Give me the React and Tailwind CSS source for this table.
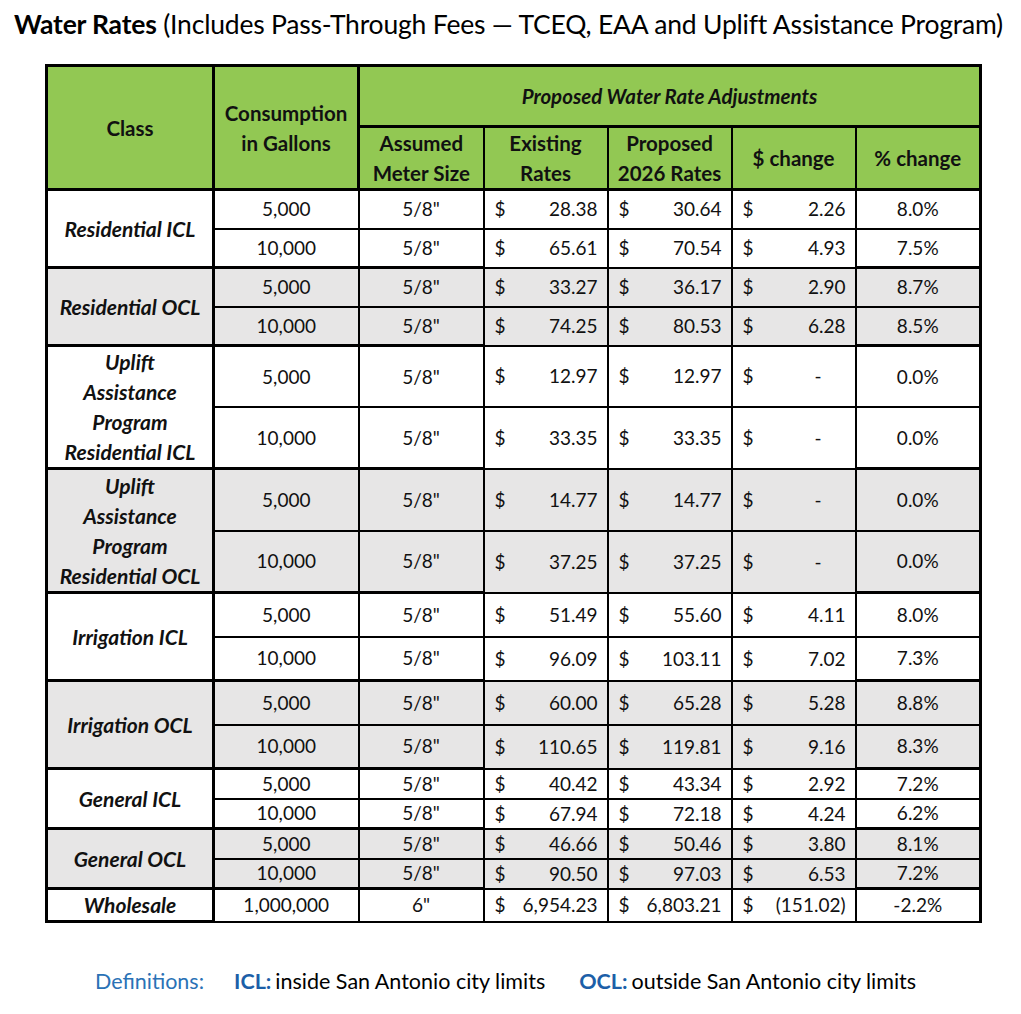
import React from 'react';

const groups = [
  { label: ['Residential ICL'], gray: false, h: 39, rows: [
    ['5,000', '5/8"', '28.38', '30.64', '2.26', '8.0%'],
    ['10,000', '5/8"', '65.61', '70.54', '4.93', '7.5%'],
  ] },
  { label: ['Residential OCL'], gray: true, h: 39, rows: [
    ['5,000', '5/8"', '33.27', '36.17', '2.90', '8.7%'],
    ['10,000', '5/8"', '74.25', '80.53', '6.28', '8.5%'],
  ] },
  { label: ['Uplift', 'Assistance', 'Program', 'Residential ICL'], gray: false, h: 61, rows: [
    ['5,000', '5/8"', '12.97', '12.97', '-', '0.0%'],
    ['10,000', '5/8"', '33.35', '33.35', '-', '0.0%'],
  ] },
  { label: ['Uplift', 'Assistance', 'Program', 'Residential OCL'], gray: true, h: 62, rows: [
    ['5,000', '5/8"', '14.77', '14.77', '-', '0.0%'],
    ['10,000', '5/8"', '37.25', '37.25', '-', '0.0%'],
  ] },
  { label: ['Irrigation ICL'], gray: false, h: 44, rows: [
    ['5,000', '5/8"', '51.49', '55.60', '4.11', '8.0%'],
    ['10,000', '5/8"', '96.09', '103.11', '7.02', '7.3%'],
  ] },
  { label: ['Irrigation OCL'], gray: true, h: 44, rows: [
    ['5,000', '5/8"', '60.00', '65.28', '5.28', '8.8%'],
    ['10,000', '5/8"', '110.65', '119.81', '9.16', '8.3%'],
  ] },
  { label: ['General ICL'], gray: false, h: 30, rows: [
    ['5,000', '5/8"', '40.42', '43.34', '2.92', '7.2%'],
    ['10,000', '5/8"', '67.94', '72.18', '4.24', '6.2%'],
  ] },
  { label: ['General OCL'], gray: true, h: 30, rows: [
    ['5,000', '5/8"', '46.66', '50.46', '3.80', '8.1%'],
    ['10,000', '5/8"', '90.50', '97.03', '6.53', '7.2%'],
  ] },
  { label: ['Wholesale'], gray: false, h: 30, rows: [
    ['1,000,000', '6"', '6,954.23', '6,803.21', '(151.02)', '-2.2%'],
  ] },
];

const Money = ({ value }) => (
  <td className="border-2 border-black px-0">
    <div className="flex justify-between pl-[10px] pr-[9px]">
      <span>$</span>
      <span className={value === '-' ? 'pr-[24px]' : ''}>{value}</span>
    </div>
  </td>
);

const App = () => {
  return (
    <div className="w-[1021px] h-[1014px] bg-white text-black font-['Lato',sans-serif]">
      <h1 className="pl-[14px] pt-[6px] text-[26.5px] leading-[36px] tracking-[-0.2px] whitespace-nowrap">
        <span className="font-bold">Water Rates</span> (Includes Pass-Through Fees — TCEQ, EAA and Uplift Assistance Program)
      </h1>

      <table className="ml-[45px] mt-[22px] w-[934px] table-fixed border-collapse text-[19px] leading-[24px] text-[#111]">
        <colgroup>
          <col className="w-[167px]" />
          <col className="w-[145px]" />
          <col className="w-[125px]" />
          <col className="w-[124px]" />
          <col className="w-[124px]" />
          <col className="w-[124px]" />
          <col className="w-[125px]" />
        </colgroup>
        <thead className="bg-[#92C853] text-[20.5px] leading-[30px]">
          <tr className="h-[61px]">
            <th rowSpan={2} className="border-[3px] border-black font-bold">Class</th>
            <th rowSpan={2} className="border-[3px] border-black font-bold">Consumption<br />in Gallons</th>
            <th colSpan={5} className="border-[3px] border-black font-bold italic">Proposed Water Rate Adjustments</th>
          </tr>
          <tr className="h-[60px]">
            <th className="border-2 border-b-[3px] border-black font-bold">Assumed<br />Meter Size</th>
            <th className="border-2 border-b-[3px] border-black font-bold">Existing<br />Rates</th>
            <th className="border-2 border-b-[3px] border-black font-bold">Proposed<br />2026 Rates</th>
            <th className="border-2 border-b-[3px] border-black font-bold">$ change</th>
            <th className="border-2 border-b-[3px] border-r-[3px] border-black font-bold">% change</th>
          </tr>
        </thead>
        <tbody>
          {groups.map((g, gi) =>
            g.rows.map((r, ri) => (
              <tr
                key={`${gi}-${ri}`}
                className={g.gray ? 'bg-[#E7E6E6]' : 'bg-white'}
                style={{ height: g.h }}
              >
                {ri === 0 && (
                  <td
                    rowSpan={g.rows.length}
                    className="border-[3px] border-black text-center text-[21px] leading-[30px] font-bold italic"
                  >
                    {g.label.map((l) => (
                      <div key={l}>{l}</div>
                    ))}
                  </td>
                )}
                <td className={`border-2 border-black text-center ${ri === 0 ? 'border-t-[3px]' : ''}`}>{r[0]}</td>
                <td className={`border-2 border-black text-center ${ri === 0 ? 'border-t-[3px]' : ''}`}>{r[1]}</td>
                <Money value={r[2]} />
                <Money value={r[3]} />
                <Money value={r[4]} />
                <td className={`border-2 border-r-[3px] border-black text-center ${ri === 0 ? 'border-t-[3px]' : ''}`}>{r[5]}</td>
              </tr>
            ))
          )}
        </tbody>
      </table>

      <div className="mt-[44px] flex pl-[95px] text-[21.5px] leading-[28px] whitespace-nowrap">
        <span className="text-[#2A72B6]">Definitions:</span>
        <span className="ml-[30px] font-bold text-[#1C5FA8]">ICL:</span>
        <span className="ml-[4px] text-black">inside San Antonio city limits</span>
        <span className="ml-[34px] font-bold text-[#1C5FA8]">OCL:</span>
        <span className="ml-[4px] text-black">outside San Antonio city limits</span>
      </div>
    </div>
  );
};

export default App;
